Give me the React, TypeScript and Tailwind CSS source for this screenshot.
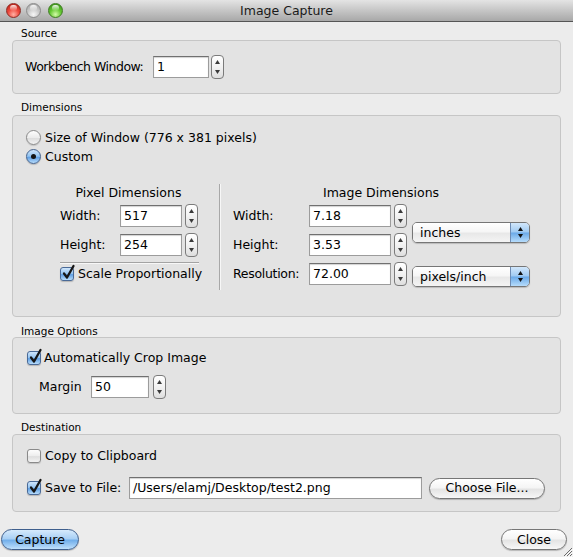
import React from "react";

function Up() {
  return (
    <svg width="5" height="4" viewBox="0 0 5 4">
      <path d="M2.5 0L5 4H0z" fill="#3a3a3a" />
    </svg>
  );
}
function Down() {
  return (
    <svg width="5" height="4" viewBox="0 0 5 4">
      <path d="M0 0H5L2.5 4z" fill="#3a3a3a" />
    </svg>
  );
}

function Stepper({ className = "" }: { className?: string }) {
  return (
    <div
      className={`flex h-[24px] w-[13px] shrink-0 flex-col items-center justify-between rounded-[4px] border border-[#7b7b7b] bg-gradient-to-b from-[#ffffff] via-[#f2f2f2] to-[#dedede] py-[4px] ${className}`}
    >
      <Up />
      <Down />
    </div>
  );
}

function Field({ value, className = "" }: { value: string; className?: string }) {
  return (
    <div
      className={`flex h-[22px] shrink-0 items-center border border-[#9c9c9c] border-t-[#707070] bg-white pl-[3px] shadow-[inset_0_1px_1px_rgba(0,0,0,0.18)] ${className}`}
    >
      {value}
    </div>
  );
}

function Popup({ label }: { label: string }) {
  return (
    <div className="flex h-[21px] w-[118px] overflow-hidden rounded-[5px] border border-[#767676] shadow-[0_1px_1px_rgba(0,0,0,0.18)]">
      <div className="flex flex-1 items-center bg-[linear-gradient(to_bottom,#ffffff_0%,#f6f6f6_45%,#e8e8e8_55%,#f4f4f4_100%)] pl-[7px]">
        {label}
      </div>
      <div className="flex w-[19px] flex-col items-center justify-center gap-[3px] border-l border-[#6e8cb4] bg-[linear-gradient(to_bottom,#d2e7fb_0%,#9fcaf2_48%,#6aa9e8_52%,#b6dcfb_100%)]">
        <svg width="5" height="4" viewBox="0 0 5 4">
          <path d="M2.5 0L5 4H0z" fill="#111" />
        </svg>
        <svg width="5" height="4" viewBox="0 0 5 4">
          <path d="M0 0H5L2.5 4z" fill="#111" />
        </svg>
      </div>
    </div>
  );
}

function Radio({ checked }: { checked?: boolean }) {
  if (checked) {
    return (
      <div className="flex h-[15px] w-[15px] shrink-0 items-center justify-center rounded-full border border-[#44638f] bg-[linear-gradient(to_bottom,#cfe5fb_0%,#93c4f1_48%,#5f9fe4_55%,#b7dcfb_100%)] shadow-[0_1px_1px_rgba(0,0,0,0.2)]">
        <div className="h-[5px] w-[5px] rounded-full bg-[#141414]" />
      </div>
    );
  }
  return (
    <div className="h-[15px] w-[15px] shrink-0 rounded-full border border-[#8a8a8a] bg-[linear-gradient(to_bottom,#fdfdfd_0%,#ececec_50%,#dcdcdc_55%,#f2f2f2_100%)] shadow-[0_1px_1px_rgba(0,0,0,0.15)]" />
  );
}

function Checkbox({ checked }: { checked?: boolean }) {
  if (checked) {
    return (
      <div className="relative h-[14px] w-[14px] shrink-0 rounded-[3px] border border-[#4a6a97] bg-[linear-gradient(to_bottom,#cfe5fb_0%,#93c4f1_48%,#5f9fe4_55%,#b7dcfb_100%)] shadow-[0_1px_1px_rgba(0,0,0,0.2)]">
        <svg
          className="absolute left-[1px] top-[-3px] overflow-visible"
          width="13"
          height="15"
          viewBox="0 0 13 15"
        >
          <path
            d="M2 8.5 L5 12.5 L11.5 1"
            stroke="#161616"
            strokeWidth="2.3"
            fill="none"
            strokeLinecap="round"
            strokeLinejoin="round"
          />
        </svg>
      </div>
    );
  }
  return (
    <div className="h-[14px] w-[14px] shrink-0 rounded-[3px] border border-[#8a8a8a] bg-[linear-gradient(to_bottom,#fdfdfd_0%,#ededed_50%,#dedede_55%,#f3f3f3_100%)] shadow-[0_1px_1px_rgba(0,0,0,0.15)]" />
  );
}

function PillButton({
  children,
  blue,
  className = "",
}: {
  children: React.ReactNode;
  blue?: boolean;
  className?: string;
}) {
  const skin = blue
    ? "border-[#3f5f8d] bg-[linear-gradient(to_bottom,#d6eafc_0%,#a9d0f5_45%,#73afea_55%,#bfe0fc_100%)]"
    : "border-[#767676] bg-[linear-gradient(to_bottom,#ffffff_0%,#f5f5f5_45%,#e4e4e4_55%,#f7f7f7_100%)]";
  return (
    <div
      className={`flex h-[21px] shrink-0 items-center justify-center rounded-full border shadow-[0_1px_1px_rgba(0,0,0,0.22)] ${skin} ${className}`}
    >
      {children}
    </div>
  );
}

function Light({ kind }: { kind: "red" | "gray" | "green" }) {
  const cls =
    kind === "red"
      ? "border-[#8e2b24] bg-[radial-gradient(circle_at_50%_80%,#ffb0a3_0%,#ee4a3e_45%,#b0170f_100%)]"
      : kind === "gray"
      ? "border-[#8c8c8c] bg-[radial-gradient(circle_at_50%_80%,#f6f6f6_0%,#cbcbcb_45%,#9c9c9c_100%)]"
      : "border-[#3f7d22] bg-[radial-gradient(circle_at_50%_80%,#d4fba8_0%,#66c933_45%,#2f8412_100%)]";
  return (
    <div className={`relative h-[15px] w-[15px] shrink-0 rounded-full border ${cls}`}>
      <div className="absolute left-[3px] top-[1px] h-[6px] w-[7px] rounded-full bg-gradient-to-b from-white/90 to-white/0" />
    </div>
  );
}

export default function App() {
  return (
    <div className="relative flex h-[557px] w-[573px] flex-col overflow-hidden bg-[#ececec] font-['DejaVu_Sans',sans-serif] text-[12.5px] leading-[16px] text-black">
      {/* Title bar */}
      <div className="grid h-[22px] shrink-0 grid-cols-[1fr_auto_1fr] items-center border-b border-[#555] bg-gradient-to-b from-[#e4e4e4] to-[#a8a8a8]">
        <div className="flex items-center pl-[6px]">
          <Light kind="red" />
          <div className="ml-[5px]">
            <Light kind="gray" />
          </div>
          <div className="ml-[7px]">
            <Light kind="green" />
          </div>
        </div>
        <div className="text-[12.5px] leading-[16px] text-[#1a1a1a]">Image Capture</div>
        <div />
      </div>

      <div className="px-[12px]">
        {/* Source */}
        <div className="h-[18px] pl-[9px] pt-[5px] text-[10.5px] leading-[13px]">Source</div>
        <div className="flex h-[54px] items-center rounded-[4px] border border-[#c6c6c6] bg-[#e3e3e3] pl-[12px]">
          <div className="w-[128px] whitespace-nowrap tracking-[-0.5px]">Workbench Window:</div>
          <Field value="1" className="w-[56px]" />
          <Stepper className="ml-[2px]" />
        </div>

        {/* Dimensions */}
        <div className="h-[21px] pl-[9px] pt-[7px] text-[10.5px] leading-[13px]">Dimensions</div>
        <div className="h-[202px] rounded-[4px] border border-[#c6c6c6] bg-[#e3e3e3] pl-[13px] pt-[12px]">
          <div className="flex h-[19px] items-center">
            <Radio />
            <span className="ml-[4px]">Size of Window (776 x 381 pixels)</span>
          </div>
          <div className="flex h-[19px] items-center">
            <Radio checked />
            <span className="ml-[4px]">Custom</span>
          </div>

          <div className="ml-[34px] mt-[18px] flex items-start">
            {/* Pixel dimensions */}
            <div className="flex w-[140px] flex-col">
              <div className="h-[17px] w-[137px] whitespace-nowrap text-center leading-[17px]">Pixel Dimensions</div>
              <div className="mt-[4px] flex h-[22px] items-center">
                <span className="w-[60px]">Width:</span>
                <Field value="517" className="w-[62px]" />
                <Stepper className="ml-[3px]" />
              </div>
              <div className="mt-[7px] flex h-[22px] items-center">
                <span className="w-[60px]">Height:</span>
                <Field value="254" className="w-[62px]" />
                <Stepper className="ml-[3px]" />
              </div>
              <div className="mt-[6px] h-[2px] w-[139px] border-b border-t border-b-[#f7f7f7] border-t-[#a3a3a3]" />
              <div className="mt-[2px] flex h-[16px] items-center whitespace-nowrap">
                <Checkbox checked />
                <span className="ml-[4px]">Scale Proportionally</span>
              </div>
            </div>

            {/* Separator */}
            <div className="ml-[19px] h-[106px] w-[2px] border-l border-r border-l-[#a8a8a8] border-r-[#f7f7f7]" />

            {/* Image dimensions */}
            <div className="ml-[12px] flex flex-col">
              <div className="h-[17px] whitespace-nowrap pl-[90px] leading-[17px]">Image Dimensions</div>
              <div className="mt-[4px] flex">
                <div className="flex flex-col">
                  <div className="flex h-[22px] items-center">
                    <span className="w-[76px]">Width:</span>
                    <Field value="7.18" className="w-[82px]" />
                    <Stepper className="ml-[3px]" />
                  </div>
                  <div className="mt-[7px] flex h-[22px] items-center">
                    <span className="w-[76px]">Height:</span>
                    <Field value="3.53" className="w-[82px]" />
                    <Stepper className="ml-[3px]" />
                  </div>
                  <div className="mt-[7px] flex h-[22px] items-center">
                    <span className="w-[76px] whitespace-nowrap tracking-[-0.3px]">Resolution:</span>
                    <Field value="72.00" className="w-[82px]" />
                    <Stepper className="ml-[3px]" />
                  </div>
                </div>
                <div className="ml-[5px] flex flex-col">
                  <div className="mt-[17px]">
                    <Popup label="inches" />
                  </div>
                  <div className="mt-[23px]">
                    <Popup label="pixels/inch" />
                  </div>
                </div>
              </div>
            </div>
          </div>
        </div>

        {/* Image Options */}
        <div className="h-[20px] pl-[9px] pt-[8px] text-[10.5px] leading-[13px]">Image Options</div>
        <div className="h-[77px] rounded-[4px] border border-[#c6c6c6] bg-[#e3e3e3] pl-[14px] pt-[12px]">
          <div className="flex h-[16px] items-center">
            <Checkbox checked />
            <span className="ml-[3px]">Automatically Crop Image</span>
          </div>
          <div className="ml-[12px] mt-[10px] flex h-[22px] items-center">
            <span className="w-[52px]">Margin</span>
            <Field value="50" className="w-[58px]" />
            <Stepper className="ml-[4px]" />
          </div>
        </div>

        {/* Destination */}
        <div className="h-[20px] pl-[9px] pt-[7px] text-[10.5px] leading-[13px]">Destination</div>
        <div className="h-[78px] rounded-[4px] border border-[#c6c6c6] bg-[#e3e3e3] pl-[14px] pt-[13px]">
          <div className="flex h-[16px] items-center">
            <Checkbox />
            <span className="ml-[4px]">Copy to Clipboard</span>
          </div>
          <div className="mt-[13px] flex h-[22px] items-center">
            <Checkbox checked />
            <span className="ml-[4px] w-[84px]">Save to File:</span>
            <Field value="/Users/elamj/Desktop/test2.png" className="w-[293px]" />
            <PillButton className="ml-[7px] w-[116px]">Choose File...</PillButton>
          </div>
        </div>
      </div>

      {/* Bottom buttons */}
      <div className="mt-[17px] flex items-center justify-between pl-[1px] pr-[6px]">
        <PillButton blue className="w-[78px]">
          Capture
        </PillButton>
        <PillButton className="w-[66px]">Close</PillButton>
      </div>

      {/* Resize grip */}
      <svg className="absolute bottom-0 right-0" width="12" height="12" viewBox="0 0 12 12">
        <path d="M11 3 L3 11 M11 6 L6 11 M11 9 L9 11" stroke="#6a6a6a" strokeWidth="1" />
        <path d="M12 4 L4 12 M12 7 L7 12 M12 10 L10 12" stroke="#fafafa" strokeWidth="1" />
      </svg>
    </div>
  );
}
